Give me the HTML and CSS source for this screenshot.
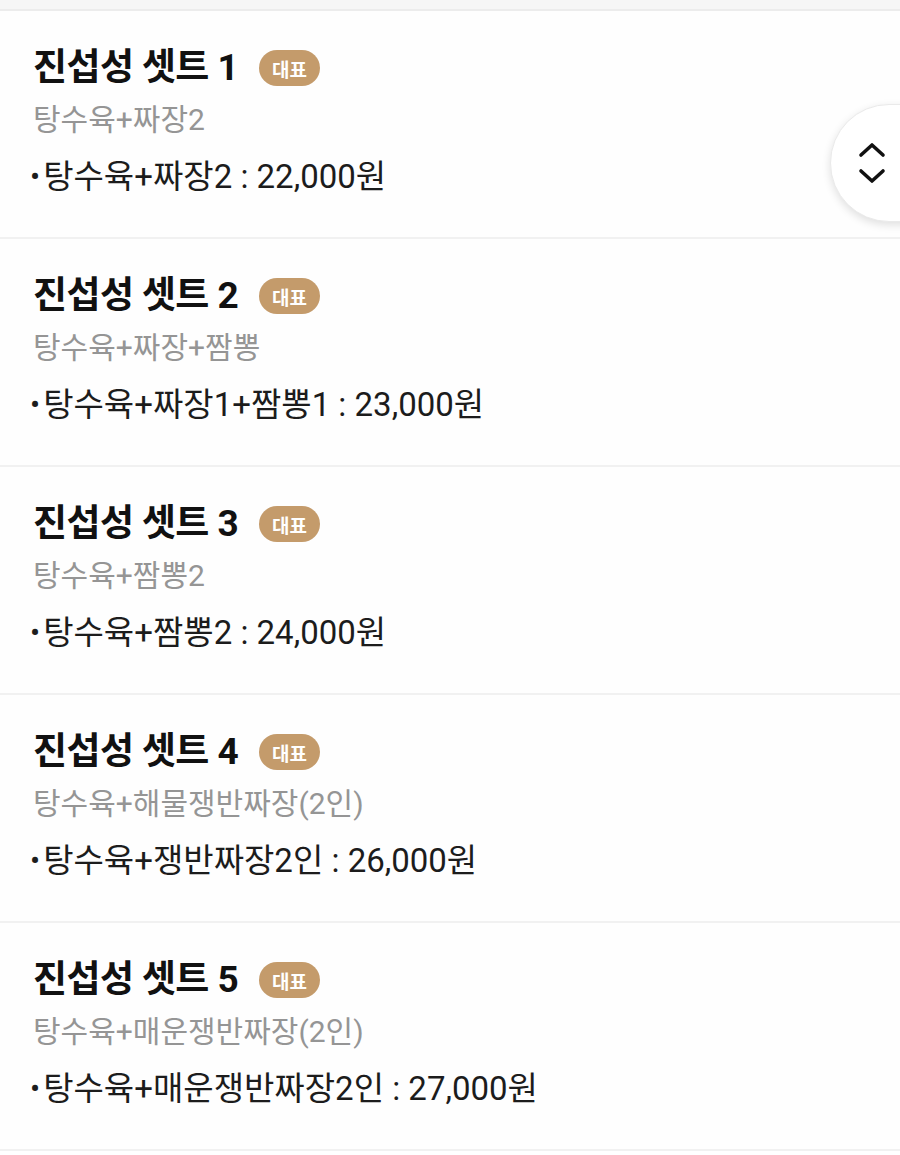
FILE: index.html
```html
<!DOCTYPE html>
<html lang="ko">
<head>
<meta charset="utf-8">
<link rel="stylesheet" href="styles.css">
</head>
<body>
<div class="topband"></div>
<ul class="list">
  <li class="item">
    <div class="title-row"><span class="title">진섭성 셋트 1</span><span class="badge">대표</span></div>
    <div class="desc">탕수육+짜장2</div>
    <div class="price"><span class="dot">•</span>탕수육+짜장2 : 22,000원</div>
  </li>
  <li class="item">
    <div class="title-row"><span class="title">진섭성 셋트 2</span><span class="badge">대표</span></div>
    <div class="desc">탕수육+짜장+짬뽕</div>
    <div class="price"><span class="dot">•</span>탕수육+짜장1+짬뽕1 : 23,000원</div>
  </li>
  <li class="item">
    <div class="title-row"><span class="title">진섭성 셋트 3</span><span class="badge">대표</span></div>
    <div class="desc">탕수육+짬뽕2</div>
    <div class="price"><span class="dot">•</span>탕수육+짬뽕2 : 24,000원</div>
  </li>
  <li class="item">
    <div class="title-row"><span class="title">진섭성 셋트 4</span><span class="badge">대표</span></div>
    <div class="desc">탕수육+해물쟁반짜장(2인)</div>
    <div class="price"><span class="dot">•</span>탕수육+쟁반짜장2인 : 26,000원</div>
  </li>
  <li class="item">
    <div class="title-row"><span class="title">진섭성 셋트 5</span><span class="badge">대표</span></div>
    <div class="desc">탕수육+매운쟁반짜장(2인)</div>
    <div class="price"><span class="dot">•</span>탕수육+매운쟁반짜장2인 : 27,000원</div>
  </li>
</ul>
<button class="scroll-btn" aria-label="scroll">
  <svg width="30" height="44" viewBox="0 0 30 44" fill="none" stroke="#111" stroke-width="3.6" stroke-linecap="round" stroke-linejoin="round">
    <path d="M4 14 L15 4 L26 14"/>
    <path d="M4 30 L15 40 L26 30"/>
  </svg>
</button>
</body>
</html>
```
FILE: styles.css
```css
html, body {
  margin: 0;
  padding: 0;
  background: #ffffff;
}
body {
  width: 900px;
  height: 1155px;
  overflow: hidden;
  position: relative;
  font-family: Roboto, "Noto Sans CJK KR", sans-serif;
}
.topband {
  height: 9px;
  background: #f6f6f6;
  border-bottom: 2px solid #ececec;
}
.list {
  list-style: none;
  margin: 0;
  padding: 0;
}
.item {
  height: 228px;
  box-sizing: border-box;
  padding: 37px 33px 0;
  border-bottom: 2px solid #f1f1f1;
  background: #fefefe;
}
.title-row {
  display: flex;
  align-items: center;
  gap: 21px;
  height: 40px;
}
.title {
  font-size: 37px;
  font-weight: 700;
  color: #111;
  letter-spacing: -0.6px;
  line-height: 40px;
}
.badge {
  display: inline-flex;
  align-items: center;
  justify-content: center;
  width: 61px;
  height: 36px;
  border-radius: 18px;
  background: #c49b6b;
  color: #fff;
  font-size: 19px;
  font-weight: 700;
}
.desc {
  margin-top: 14px;
  font-size: 30px;
  color: #959595;
  line-height: 36px;
}
.price {
  margin-top: 19px;
  margin-left: -3px;
  font-size: 33px;
  color: #1c1c1c;
  line-height: 40px;
}
.dot {
  font-size: 30px;
  margin-right: 3px;
  vertical-align: 1px;
}
.scroll-btn {
  position: absolute;
  left: 830px;
  top: 104px;
  width: 110px;
  height: 118px;
  border: 1px solid #eaeaea;
  border-radius: 59px 0 0 59px;
  background: #fff;
  box-shadow: 0 3px 8px rgba(0,0,0,0.12);
  padding: 0 0 0 26px;
  display: flex;
  align-items: center;
  justify-content: flex-start;
}
```
